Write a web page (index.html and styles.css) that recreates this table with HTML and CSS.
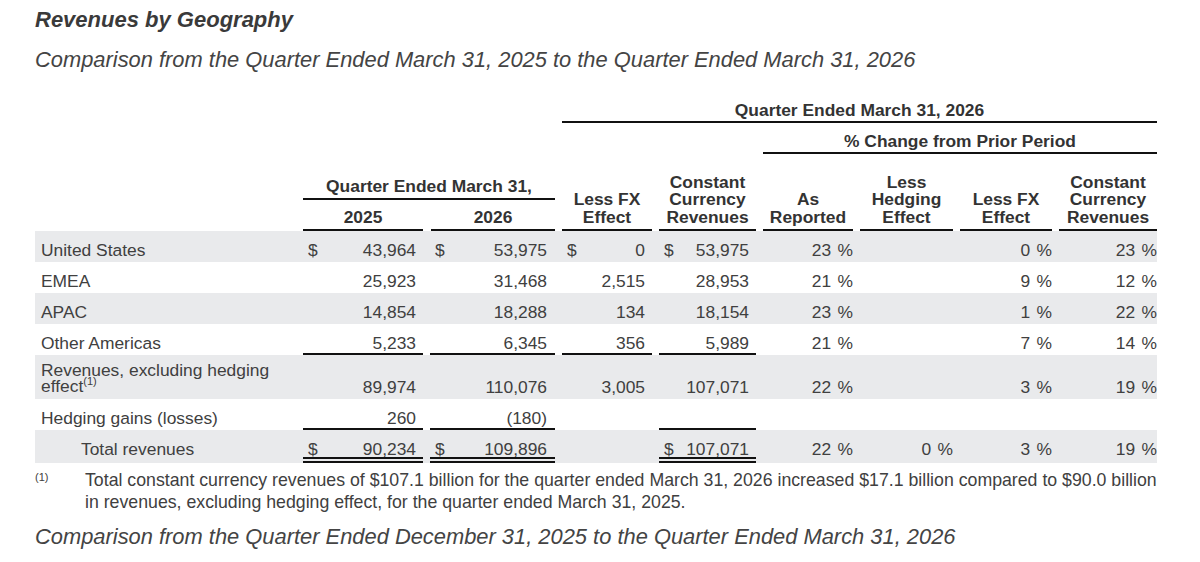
FILE: index.html
```html
<!DOCTYPE html>
<html lang="en">
<head>
<meta charset="utf-8">
<title>Revenues by Geography</title>
<link rel="stylesheet" href="styles.css">
</head>
<body>
<div class="page">
  <h1 class="title">Revenues by Geography</h1>
  <h2 class="sub">Comparison from the Quarter Ended March 31, 2025 to the Quarter Ended March 31, 2026</h2>

  <div class="tbl">
    <div class="row hA"><div class="span qtr">Quarter Ended March 31, 2026</div></div>
    <div class="row hB"><div class="span pctchg">% Change from Prior Period</div></div>
    <div class="row hC">
      <div class="blank"></div>
      <div class="qgrp">
        <div class="qtop">Quarter Ended March 31,</div>
        <div class="qyears"><div class="yr">2025</div><div class="yr">2026</div></div>
      </div>
      <div class="hc">Less FX<br>Effect</div>
      <div class="hc">Constant<br>Currency<br>Revenues</div>
      <div class="hc">As<br>Reported</div>
      <div class="hc">Less<br>Hedging<br>Effect</div>
      <div class="hc">Less FX<br>Effect</div>
      <div class="hc">Constant<br>Currency<br>Revenues</div>
    </div>

    <div class="row g">
      <div class="lbl">United States</div>
      <div class="num"><span class="cur">$</span>43,964</div>
      <div class="num c2"><span class="cur">$</span>53,975</div>
      <div class="num"><span class="cur">$</span>0</div>
      <div class="num"><span class="cur">$</span>53,975</div>
      <div class="pc">23 %</div>
      <div class="pc"></div>
      <div class="pc">0 %</div>
      <div class="pc">23 %</div>
    </div>
    <div class="row">
      <div class="lbl">EMEA</div>
      <div class="num">25,923</div>
      <div class="num c2">31,468</div>
      <div class="num">2,515</div>
      <div class="num">28,953</div>
      <div class="pc">21 %</div>
      <div class="pc"></div>
      <div class="pc">9 %</div>
      <div class="pc">12 %</div>
    </div>
    <div class="row g">
      <div class="lbl">APAC</div>
      <div class="num">14,854</div>
      <div class="num c2">18,288</div>
      <div class="num">134</div>
      <div class="num">18,154</div>
      <div class="pc">23 %</div>
      <div class="pc"></div>
      <div class="pc">1 %</div>
      <div class="pc">22 %</div>
    </div>
    <div class="row">
      <div class="lbl">Other Americas</div>
      <div class="num u">5,233</div>
      <div class="num c2 u">6,345</div>
      <div class="num u">356</div>
      <div class="num u">5,989</div>
      <div class="pc">21 %</div>
      <div class="pc"></div>
      <div class="pc">7 %</div>
      <div class="pc">14 %</div>
    </div>
    <div class="row g tall">
      <div class="lbl two">Revenues, excluding hedging effect<sup class="sup">(1)</sup></div>
      <div class="num">89,974</div>
      <div class="num c2">110,076</div>
      <div class="num">3,005</div>
      <div class="num">107,071</div>
      <div class="pc">22 %</div>
      <div class="pc"></div>
      <div class="pc">3 %</div>
      <div class="pc">19 %</div>
    </div>
    <div class="row">
      <div class="lbl">Hedging gains (losses)</div>
      <div class="num u">260</div>
      <div class="num c2 u">(180)</div>
      <div class="num"></div>
      <div class="num u"></div>
      <div class="pc"></div>
      <div class="pc"></div>
      <div class="pc"></div>
      <div class="pc"></div>
    </div>
    <div class="row g total">
      <div class="lbl ind">Total revenues</div>
      <div class="num uu"><span class="cur">$</span>90,234</div>
      <div class="num c2 uu"><span class="cur">$</span>109,896</div>
      <div class="num"></div>
      <div class="num uu"><span class="cur">$</span>107,071</div>
      <div class="pc">22 %</div>
      <div class="pc">0 %</div>
      <div class="pc">3 %</div>
      <div class="pc">19 %</div>
    </div>
  </div>

  <div class="fn">
    <div class="fnm">(1)</div>
    <p class="fnt">Total constant currency revenues of $107.1 billion for the quarter ended March 31, 2026 increased $17.1 billion compared to $90.0 billion<br>in revenues, excluding hedging effect, for the quarter ended March 31, 2025.</p>
  </div>

  <h2 class="sub last">Comparison from the Quarter Ended December 31, 2025 to the Quarter Ended March 31, 2026</h2>
</div>
</body>
</html>
```

FILE: styles.css
```css
body {
  margin: 0;
  background: #ffffff;
  font-family: "Liberation Sans", Arial, sans-serif;
  color: #404040;
}

.page {
  padding: 7px 0 0 35px;
  width: 1122px;
}

.title {
  margin: 0;
  font-size: 22px;
  line-height: 26px;
  font-weight: bold;
  font-style: italic;
  color: #3a3a3a;
}

.sub {
  margin: 14px 0 0;
  font-size: 21.88px;
  line-height: 26px;
  font-weight: normal;
  font-style: italic;
  color: #444444;
}

.tbl {
  margin-top: 27px;
  font-size: 17.4px;
}

.row {
  display: grid;
  grid-template-columns: 261px 127px 132px 97px 104px 97px 100px 99px 105px;
  height: 31px;
}

.row.g {
  background: #e9eaec;
}

/* header rows */
.span {
  margin-left: 7px;
  text-align: center;
  font-weight: bold;
  color: #333333;
  line-height: 20px;
  border-bottom: 2px solid #111111;
}

.hA {
  height: 23px;
}

.hA .qtr {
  grid-column: 4 / 10;
  padding-bottom: 1px;
}

.hB {
  height: 31px;
}

.hB .pctchg {
  grid-column: 6 / 10;
  padding-top: 8px;
  padding-bottom: 1px;
}

.hC {
  height: 77px;
}

.qgrp {
  grid-column: 2 / 4;
  margin-left: 7px;
  display: flex;
  flex-direction: column;
  font-weight: bold;
  color: #333333;
}

.qtop {
  padding-top: 22px;
  padding-bottom: 2px;
  line-height: 20px;
  text-align: center;
  border-bottom: 2px solid #111111;
}

.qyears {
  display: grid;
  grid-template-columns: 120px 124px;
  column-gap: 8px;
}

.yr {
  padding-top: 7px;
  padding-bottom: 2px;
  line-height: 20px;
  text-align: center;
  border-bottom: 2px solid #111111;
}

.hc {
  margin-left: 7px;
  display: flex;
  flex-direction: column;
  justify-content: flex-end;
  padding-bottom: 3px;
  line-height: 17.5px;
  text-align: center;
  font-weight: bold;
  color: #333333;
  border-bottom: 2px solid #111111;
}

/* body cells */
.lbl,
.num,
.pc {
  display: flex;
  align-items: flex-end;
  line-height: 20px;
  padding-bottom: 2px;
}

.lbl {
  padding-left: 6px;
  white-space: nowrap;
}

.lbl.ind {
  padding-left: 46px;
}

.num {
  margin-left: 7px;
  padding-left: 5px;
  padding-right: 7px;
  justify-content: flex-end;
}

.num.c2 {
  padding-right: 8px;
}

.cur {
  margin-right: auto;
}

.pc {
  margin-left: 7px;
  justify-content: flex-end;
  white-space: pre;
  word-spacing: 1.5px;
}

.row .u {
  border-bottom: 2px solid #111111;
  padding-bottom: 0;
}

.row.tall {
  height: 44px;
}

.row.tall > div {
  line-height: 16px;
  padding-bottom: 4px;
}

.row.tall > .lbl.two {
  display: block;
  white-space: normal;
  width: 240px;
  padding-top: 7px;
  padding-bottom: 0;
}

.sup {
  font-size: 11px;
  vertical-align: 7px;
  line-height: 0;
}

.row.total {
  height: 33px;
}

.row.total > div {
  line-height: 16px;
  padding-bottom: 6px;
}

.row.total > .uu {
  border-bottom: 6px double #111111;
  padding-bottom: 0;
}

/* footnote */
.fn {
  display: flex;
  margin-top: 6px;
}

.fnm {
  width: 50px;
  flex: none;
  font-size: 11px;
  line-height: 14px;
  padding-top: 1px;
}

.fnt {
  margin: 0;
  font-size: 17.73px;
  line-height: 22px;
  white-space: nowrap;
}

.sub.last {
  margin-top: 11px;
}
```
